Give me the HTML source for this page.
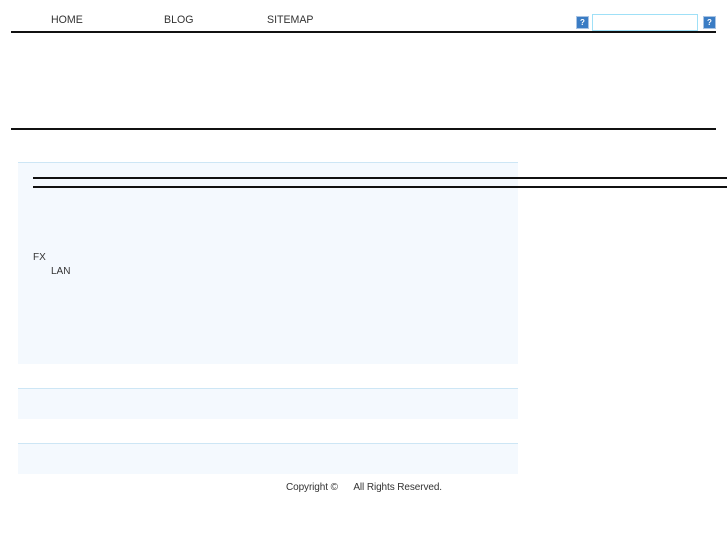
<!DOCTYPE html>
<html><head><meta charset="utf-8"><style>
body{margin:0;width:727px;height:545px;background:#fff;font-family:"Liberation Sans",sans-serif;font-size:10.6px;color:#333;position:relative;overflow:hidden}
.a{position:absolute}
.ic{position:absolute;width:11px;height:11px;background:#3a7cc4;border:1px solid #a9c4e4;color:#fff;font-size:8px;line-height:11px;text-align:center;font-weight:bold}
</style></head><body>
<div class="a" style="left:51px;top:14px">HOME</div>
<div class="a" style="left:164px;top:14px">BLOG</div>
<div class="a" style="left:267px;top:14px">SITEMAP</div>
<div class="ic" style="left:576px;top:16px">?</div>
<div class="a" style="left:592px;top:14px;width:104px;height:15px;border:1px solid #9fe0f7"></div>
<div class="ic" style="left:703px;top:16px">?</div>
<div class="a" style="left:11px;top:31px;width:705px;height:2px;background:#111"></div>
<div class="a" style="left:11px;top:128px;width:705px;height:2px;background:#111"></div>
<div class="a" style="left:18px;top:162px;width:500px;height:201px;background:#f4f9fe;border-top:1px solid #cde6f5"></div>
<div class="a" style="left:33px;top:177px;width:694px;height:2px;background:#111"></div>
<div class="a" style="left:33px;top:186px;width:694px;height:2px;background:#111"></div>
<div class="a" style="left:33px;top:252px;font-size:10px">FX</div>
<div class="a" style="left:51px;top:266px;font-size:10px">LAN</div>
<div class="a" style="left:18px;top:388px;width:500px;height:30px;background:#f4f9fe;border-top:1px solid #cde6f5"></div>
<div class="a" style="left:18px;top:443px;width:500px;height:30px;background:#f4f9fe;border-top:1px solid #cde6f5"></div>
<div class="a" style="left:286px;top:482px;font-size:10px;color:#333;letter-spacing:-0.1px">Copyright ©&nbsp;&nbsp;&nbsp;&nbsp;&nbsp; All Rights Reserved.</div>
</body></html>
